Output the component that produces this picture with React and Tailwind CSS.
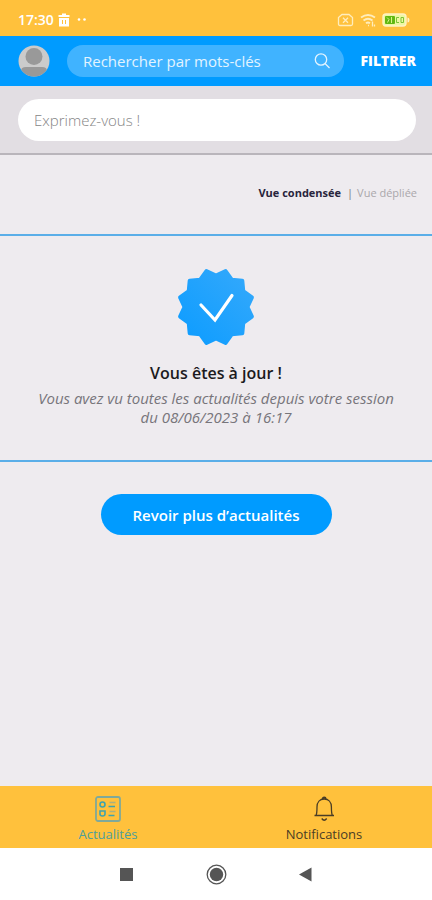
import React, { useState } from "react";

// Outline of the notched badge: twelve tips, the round line join softens them
const badgePoints = Array.from({ length: 24 }, (_, i) => {
  const angle = (i * Math.PI) / 12;
  const radius = i % 2 === 0 ? 31.5 : 37.2;
  return `${(40 + radius * Math.cos(angle)).toFixed(2)},${(40 + radius * Math.sin(angle)).toFixed(2)}`;
}).join(" ");

const StatusBar = () => (
  <div className="flex h-9 items-center justify-between bg-[#ffc13c] pl-[18px] pr-[22px] pt-1 text-white">
    <div className="flex items-center gap-[3px]">
      <span className="text-[14px] font-semibold leading-4">17:30</span>
      <svg width="14" height="14" viewBox="0 0 14 14" fill="currentColor" aria-hidden="true">
        <path d="M5 0.5h4v1.5h3.5v2h-11v-2H5zM2 5h10v8.500h-10z" />
        <path d="M5.500 7v4M8.500 7v4" stroke="#ffc13c" strokeWidth="1" />
      </svg>
      <svg width="14" height="14" viewBox="0 0 14 14" fill="currentColor" aria-hidden="true">
        <circle cx="5" cy="6.500" r="1.300" />
        <circle cx="10.500" cy="6.500" r="1.300" />
      </svg>
    </div>
    <div className="flex items-center gap-[6px]">
      <svg width="17" height="14" viewBox="0 0 17 14" fill="none" stroke="#ffedbd" strokeWidth="1.300" aria-hidden="true">
        <path d="M5 1.500h7l3.500 3V11q0 1.500-1.500 1.500H3Q1.500 12.500 1.500 11V4.500z" />
        <path d="M6 4.800l5 5M11 4.800l-5 5" />
      </svg>
      <svg width="16" height="14" viewBox="0 0 16 14" fill="none" stroke="#ffedbd" strokeWidth="1.800" aria-hidden="true">
        <path d="M1 4.500q7-5 14 0M3.500 7.500q4.500-3.500 9 0M6 10.300q2-1.600 4 0" />
        <path d="M8 12.500h1M12.500 8.500v5M14.500 11.500v2" strokeWidth="1.300" />
      </svg>
      <svg width="28" height="14" viewBox="0 0 28 14" aria-hidden="true">
        <rect x="1" y="1" width="23" height="12" rx="3" fill="#eef7a2" stroke="#fff2c4" strokeWidth="1.400" />
        <path d="M25.500 4.500q2 0 2 2.500t-2 2.500z" fill="#fff2c4" />
        <rect x="3" y="3" width="10" height="8" rx="1" fill="#62b812" />
        <path d="M5 4.500l2 2-1.500 3M9.500 4v6" fill="none" stroke="#dcf08a" strokeWidth="1" />
        <path d="M17 4.500h-2.500v5H17M21.500 4.500H19v5h2.500z" fill="none" stroke="#7cc435" strokeWidth="1" />
      </svg>
    </div>
  </div>
);

const Avatar = () => (
  <svg className="shrink-0" width="32" height="32" viewBox="0 0 32 32" role="img" aria-label="Profil">
    <defs>
      <clipPath id="avatar-clip">
        <circle cx="16" cy="16" r="15.500" />
      </clipPath>
    </defs>
    <g clipPath="url(#avatar-clip)">
      <rect width="32" height="32" fill="#cbcbcb" />
      <circle cx="16" cy="11.500" r="8.500" fill="#999" />
      <path d="M3 32v-6q0-4 5-4h16q5 0 5 4v6z" fill="#999" />
    </g>
  </svg>
);

const Header = () => (
  <header className="flex h-[50px] items-center gap-[17px] bg-[#009bff] pl-[18px] pr-4 text-white">
    <Avatar />
    <label className="flex h-8 min-w-0 flex-1 items-center rounded-full bg-[#40b3ff] pl-4 pr-3">
      <input
        type="search"
        aria-label="Rechercher par mots-clés"
        placeholder="Rechercher par mots-clés"
        className="min-w-0 flex-1 bg-transparent text-[15px] leading-5 outline-none placeholder:text-[#e3f4ff]"
      />
      <svg width="18" height="18" viewBox="0 0 18 18" fill="none" stroke="#e3f4ff" strokeWidth="1.300" aria-hidden="true">
        <circle cx="7" cy="7.500" r="5.700" />
        <path d="M11 11.500l4.500 4.500" />
      </svg>
    </label>
    <button type="button" className="text-[14px] font-extrabold leading-5">FILTRER</button>
  </header>
);

const ListIcon = () => (
  <svg width="28" height="28" viewBox="0 0 28 28" fill="none" aria-hidden="true">
    <rect x="2" y="2" width="24" height="24" rx="2" stroke="#7fa99a" strokeWidth="1.800" />
    <g stroke="#3ea3ae" strokeWidth="1.600">
      <circle cx="8.500" cy="9.500" r="2.500" />
      <path d="M6 16v3q0 2 2.500 2t2.500-2v-3z" />
      <path d="M14.500 11.500h6.500M14.500 20.500h6" />
    </g>
    <path d="M15.500 7.500h6M15.500 16.500h6" stroke="#a9b17f" strokeWidth="1.300" />
  </svg>
);

const BellIcon = () => (
  <svg width="28" height="28" viewBox="0 0 28 28" fill="none" stroke="#4a3d25" strokeWidth="1.300" aria-hidden="true">
    <path d="M4.500 20.500h19.500M6 20.500c1-2 1-5 1-8.500 0-5 3-8 7.200-8s7.200 3 7.200 8c0 3.500 0 6.500 1 8.500" />
    <path d="M12.700 4q0-1.500 1.500-1.500T15.700 4" strokeWidth="1.800" />
    <path d="M11.700 23.500q2.500 3.500 5 0" />
  </svg>
);

const TabBar = () => (
  <nav className="grid h-[62px] grid-cols-2 bg-[#ffc13c]">
    <a href="#actualites" aria-current="page" className="flex flex-col items-center gap-[3px] pt-[9px] text-[13px] leading-4 text-[#4d9f9c]">
      <ListIcon />
      Actualités
    </a>
    <a href="#notifications" className="flex flex-col items-center gap-[3px] pt-[9px] text-[13px] leading-4 text-[#4a3d25]">
      <BellIcon />
      Notifications
    </a>
  </nav>
);

const SystemBar = () => (
  <div className="flex h-[52px] items-center justify-center gap-[68px] bg-white">
    <button type="button" aria-label="Applications récentes">
      <svg width="22" height="22" viewBox="0 0 22 22"><rect x="5" y="5" width="13" height="13" fill="#555" /></svg>
    </button>
    <button type="button" aria-label="Accueil">
      <svg width="22" height="22" viewBox="0 0 22 22">
        <circle cx="11.500" cy="11.500" r="9.300" fill="none" stroke="#555" strokeWidth="1.300" />
        <circle cx="11.500" cy="11.500" r="6.700" fill="#555" />
      </svg>
    </button>
    <button type="button" aria-label="Retour">
      <svg width="22" height="22" viewBox="0 0 22 22"><path d="M4 11.500l12.500-7v14z" fill="#555" /></svg>
    </button>
  </div>
);

const App = () => {
  const [condensed, setCondensed] = useState(true);

  const viewClass = (active) => (active ? "font-bold text-[#28243c]" : "text-[#aaa7ab]");

  return (
    <div className="flex min-h-screen flex-col bg-[#eeebef] font-['Open_Sans',sans-serif]">
      <StatusBar />
      <Header />

      <div className="border-b-2 border-[#b9b5bb] bg-[#e2dee3] pb-3 pl-[18px] pr-4 pt-[13px]">
        <input
          type="text"
          aria-label="Exprimez-vous !"
          placeholder="Exprimez-vous !"
          className="block h-[42px] w-full rounded-full bg-white px-4 text-[15px] font-light leading-5 outline-none placeholder:text-[#858585]"
        />
      </div>

      <main className="flex-1">
        <div className="flex h-[79px] items-center justify-end gap-1 pb-1 pr-[15px] text-[11px] leading-4">
          <button type="button" className={viewClass(condensed)} onClick={() => setCondensed(true)}>Vue condensée</button>
          <span className="pl-[2px] text-[#777]">|</span>
          <button type="button" className={viewClass(!condensed)} onClick={() => setCondensed(false)}>Vue dépliée</button>
        </div>

        <section className="flex flex-col items-center border-y-2 border-[#5aaee8] px-8 pb-[33px] pt-[31px] text-center">
          <svg width="80" height="80" viewBox="0 0 80 80" aria-hidden="true">
            <defs>
              <linearGradient id="badge-fill" x1="0" y1="1" x2="1" y2="0">
                <stop offset="0" stopColor="#0c9cff" />
                <stop offset="1" stopColor="#35a9fb" />
              </linearGradient>
            </defs>
            <polygon points={badgePoints} fill="url(#badge-fill)" stroke="url(#badge-fill)" strokeWidth="4" strokeLinejoin="round" />
            <path d="M25 38l14 15L56 28.500" fill="none" stroke="#fff" strokeWidth="3.200" strokeLinecap="round" />
          </svg>
          <h2 className="mt-4 text-[16px] font-semibold leading-5 text-[#1b1a20]">Vous êtes à jour !</h2>
          <p className="mt-[6px] text-[15px] italic leading-[19px] text-[#77757b]">
            Vous avez vu toutes les actualités depuis votre session du 08/06/2023 à 16:17
          </p>
        </section>

        <div className="flex justify-center pt-8">
          <button type="button" className="h-[41px] rounded-full bg-[#009bff] px-8 text-[15px] font-semibold leading-5 text-white">
            Revoir plus d’actualités
          </button>
        </div>
      </main>

      <TabBar />
      <SystemBar />
    </div>
  );
};

export default App;
